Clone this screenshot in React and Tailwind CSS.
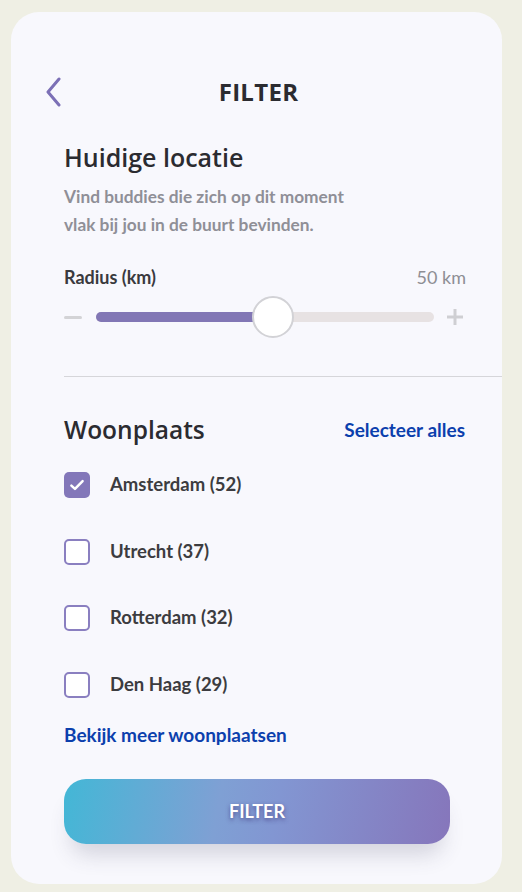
import React from "react";

function Check({ checked }) {
  return checked ? (
    <div className="w-[26px] h-[26px] rounded-[5px] bg-[#8377b9] flex items-center justify-center">
      <svg width="18" height="18" viewBox="0 0 16 16" fill="none">
        <path d="M3 8.5l3.2 3L13 4.5" stroke="white" strokeWidth="2.2" strokeLinecap="round" strokeLinejoin="round" />
      </svg>
    </div>
  ) : (
    <div className="w-[26px] h-[26px] rounded-[5px] border-2 border-[#8a7fc0] bg-white" />
  );
}

export default function App() {
  const cities = [
    ["Amsterdam (52)", true],
    ["Utrecht (37)", false],
    ["Rotterdam (32)", false],
    ["Den Haag (29)", false],
  ];
  return (
    <div className="w-[522px] h-[892px] bg-[#efefe4] pt-[12px] pl-[11px]" style={{ fontFamily: "Lato, sans-serif" }}>
      <div className="w-[491px] h-[872px] bg-[#f8f8fd] rounded-[28px] overflow-hidden">
        {/* header */}
        <div className="relative mt-[62px] h-[36px] flex items-center justify-center">
          <svg className="absolute left-[34px] top-[3px]" width="16" height="30" viewBox="0 0 16 30" fill="none">
            <path d="M14 2L3 15l11 13" stroke="#7c70b6" strokeWidth="3" strokeLinecap="round" strokeLinejoin="round" />
          </svg>
          <div className="text-[24px] font-bold text-[#2b2b30] leading-[36px] ml-[4px] tracking-[0.3px]" style={{ fontFamily: "'Open Sans', sans-serif" }}>
            FILTER
          </div>
        </div>

        <div className="pl-[53px]">
          <div className="mt-[31px] text-[25px] leading-[32px] font-semibold text-[#2b2b30]" style={{ fontFamily: "'Open Sans', sans-serif" }}>
            Huidige locatie
          </div>
          <div className="mt-[10px] text-[17.3px] font-bold text-[#8f8f97] leading-[28px]">
            Vind buddies die zich op dit moment
            <br />
            vlak bij jou in de buurt bevinden.
          </div>

          <div className="mt-[26px] flex justify-between items-center w-[402px] h-[24px] text-[18px]">
            <span className="font-bold text-[#3a3a3e]">Radius (km)</span>
            <span className="text-[#8e8e94]">50 km</span>
          </div>

          <div className="mt-[6px] flex items-center w-[402px] h-[44px]">
            <div className="w-[18px] h-[3px] bg-[#d3d3d6] rounded" />
            <div className="ml-[14px] relative w-[338px] h-[10px] rounded-full bg-[#e7e2e3]">
              <div className="absolute left-0 top-0 h-[10px] w-[180px] rounded-full bg-[#8277b5]" />
              <div className="absolute left-[156px] top-[-16px] w-[42px] h-[42px] rounded-full bg-white border-2 border-[#d2d2d6]" />
            </div>
            <svg className="ml-[12px]" width="18" height="18" viewBox="0 0 18 18">
              <path d="M9 1v16M1 9h16" stroke="#cfcfd3" strokeWidth="3" />
            </svg>
          </div>

          <div className="mt-[37px] h-[1px] bg-[#d6d6da]" />

          <div className="mt-[37px] flex justify-between items-center w-[401px] h-[32px]">
            <span className="text-[24.5px] font-semibold text-[#2b2b30]" style={{ fontFamily: "'Open Sans', sans-serif" }}>
              Woonplaats
            </span>
            <span className="text-[19px] font-bold text-[#0c3fad]">Selecteer alles</span>
          </div>

          <div className="mt-[26px] flex flex-col gap-[40.5px]">
            {cities.map(([name, checked]) => (
              <div key={name} className="flex items-center h-[26px]">
                <Check checked={checked} />
                <span className="ml-[20px] text-[18.5px] font-bold text-[#3c3c40]">{name}</span>
              </div>
            ))}
          </div>

          <div className="mt-[23px] h-[27px] leading-[27px] text-[19px] font-bold text-[#0c3fad]">Bekijk meer woonplaatsen</div>

          <div className="mt-[31px] w-[386px] h-[65px] rounded-[22px] bg-[linear-gradient(100deg,#43b7d6_0%,#7fa0d4_40%,#8296d2_55%,#8676bb_100%)] flex items-center justify-center shadow-[0_18px_22px_-8px_rgba(60,60,90,0.2)]">
            <span className="text-[18px] font-bold text-white [text-shadow:0_2px_4px_rgba(60,50,120,0.7)]">FILTER</span>
          </div>
        </div>
      </div>
    </div>
  );
}
